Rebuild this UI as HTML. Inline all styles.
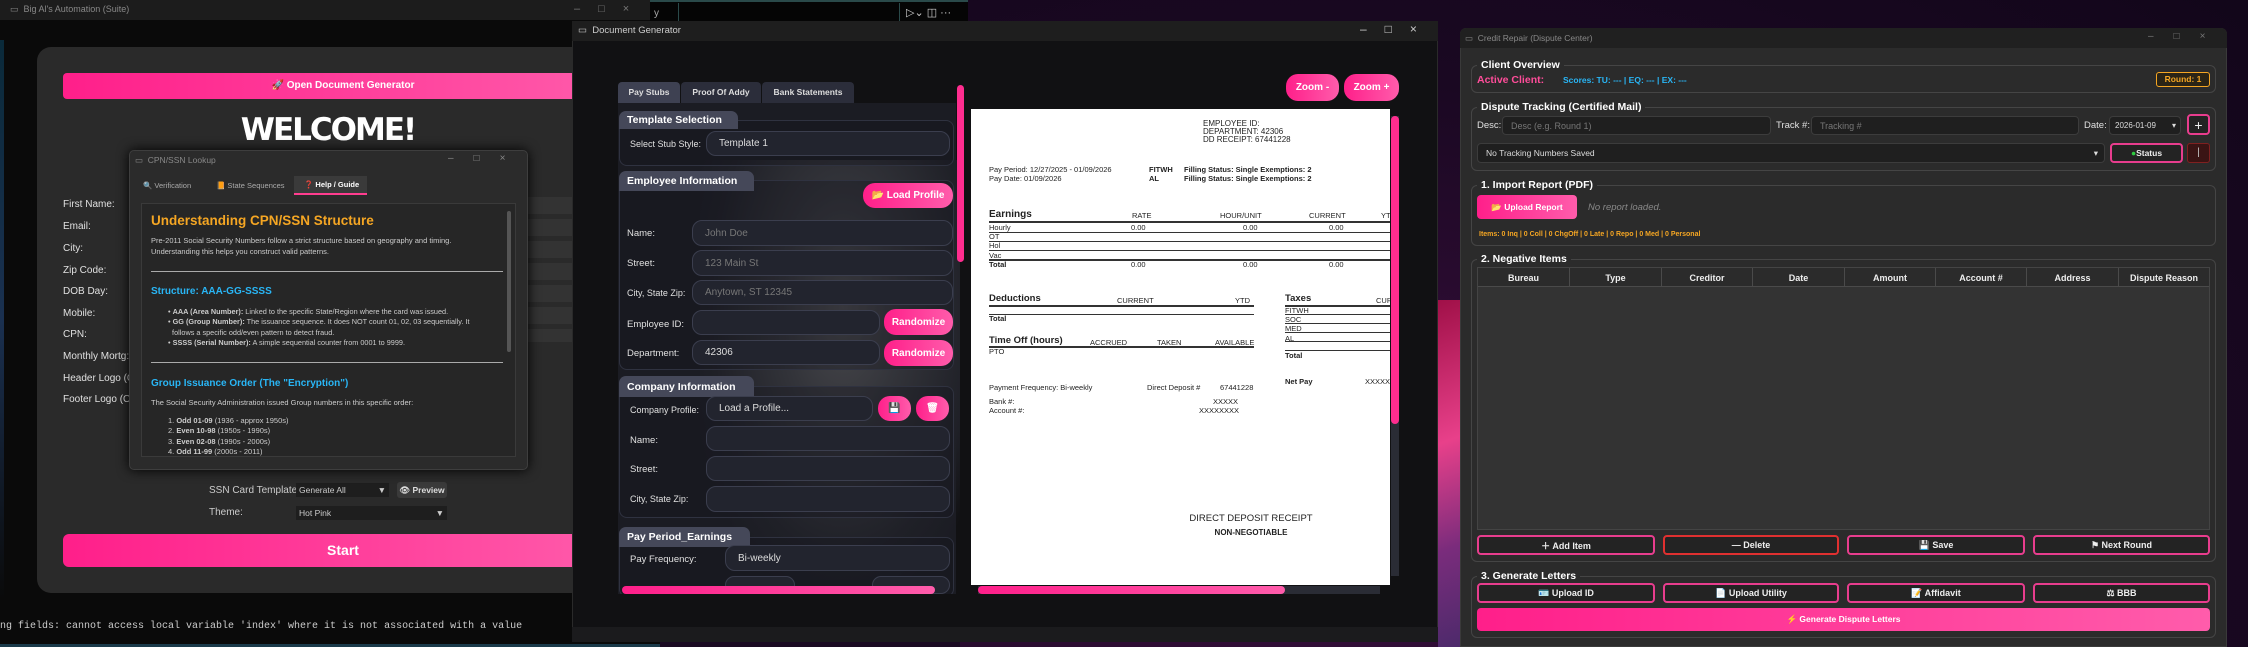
<!DOCTYPE html>
<html><head><meta charset="utf-8"><style>
*{box-sizing:border-box;margin:0;padding:0}
body{width:2248px;height:647px;overflow:hidden;position:relative;background:#1a0a22;font-family:"Liberation Sans",sans-serif;color:#ddd}
.a{position:absolute}
.lbl{position:absolute;font-size:12px;color:#e0e0e0;white-space:nowrap}
.pink{background:linear-gradient(90deg,#ff1f8a,#ff5cab);color:#fff;font-weight:bold;text-align:center;border-radius:6px;white-space:nowrap}
.inp{position:absolute;background:#22242e;border:1px solid #3b3e4e;border-radius:10px;font-size:12px;color:#777;padding-left:12px;display:flex;align-items:center;white-space:nowrap}
.hdr{position:absolute;background:#454859;border-radius:7px 7px 0 0;color:#fff;font-weight:bold;font-size:13px;padding-left:8px;display:flex;align-items:center;white-space:nowrap}
.sec{position:absolute;border:1px solid #2f3240;border-radius:8px;background:rgba(20,21,28,0.35)}
.pbtn{position:absolute;background:linear-gradient(90deg,#ff1f8a,#ff5cab);border-radius:12px;color:#fff;font-weight:bold;font-size:12px;display:flex;align-items:center;justify-content:center;white-space:nowrap}
.p{position:absolute;font-size:8.5px;color:#222;white-space:nowrap;font-family:"Liberation Sans",sans-serif}
.b{font-weight:bold}
.ln{position:absolute;height:1px;background:#333}
.grp{position:absolute;border:1px solid #454545;border-radius:6px}
.gt{position:absolute;background:#2b2b2b;color:#fff;font-weight:bold;font-size:10.5px;padding:0 4px;white-space:nowrap}
.rb{position:absolute;border:2px solid #e83d8e;border-radius:4px;background:#232323;color:#eee;font-size:9px;font-weight:bold;display:flex;align-items:center;justify-content:center;white-space:nowrap}
.ri{position:absolute;background:#1f1f1f;border:1px solid #3c3c3c;border-radius:4px;font-size:9px;color:#777;padding-left:8px;display:flex;align-items:center;white-space:nowrap}
.th{position:absolute;top:0;height:19px;border-right:1px solid #4a4a4a;font-size:9px;color:#eee;font-weight:bold;display:flex;align-items:center;justify-content:center}
.dl{position:absolute;font-size:9.5px;color:#e0e0e0;white-space:nowrap}
</style></head><body>

<!-- background purple -->
<div class="a" style="left:960px;top:0;width:1288px;height:647px;background:radial-gradient(ellipse at 30% 80%,#3a0f3e,#1a0822 60%,#12061a)"></div>
<div class="a" style="left:1438px;top:300px;width:40px;height:347px;background:linear-gradient(160deg,#a01048,#e8408a 40%,#7a2c7c 70%,#4a2a6a)"></div>

<!-- LEFT WINDOW -->
<div class="a" style="left:0;top:0;width:660px;height:647px;background:#0a0a0a"></div>
<div class="a" style="left:0;top:0;width:660px;height:20px;background:#1c1c1c"></div>
<div class="lbl" style="left:10px;top:4px;font-size:9px;color:#888">▭ &nbsp;Big Al's Automation (Suite)</div>
<div class="lbl" style="left:574px;top:3px;font-size:11px;color:#777;letter-spacing:18px">–□×</div>
<div class="a" style="left:0;top:40px;width:4px;height:560px;background:linear-gradient(#0a2a3a,#1a3050,#0a0a0a)"></div>
<div class="a" style="left:37px;top:47px;width:600px;height:546px;background:#2a2a2a;border-radius:14px"></div>
<div class="a" style="left:100px;top:160px;width:460px;height:320px;background:radial-gradient(ellipse,#363636,#2a2a2a 65%)"></div>
<div class="a pink" style="left:63px;top:73px;width:560px;height:26px;line-height:26px;font-size:10px;border-radius:4px">🚀 Open Document Generator</div>
<div class="a" style="left:200px;top:112px;width:256px;text-align:center;font-size:31px;font-weight:900;color:#fff;letter-spacing:-2px;font-family:'DejaVu Sans',sans-serif">WELCOME!</div>
<div class="lbl" style="left:63px;top:199px;font-size:10px">First Name:</div>
<div class="lbl" style="left:63px;top:221px;font-size:10px">Email:</div>
<div class="lbl" style="left:63px;top:243px;font-size:10px">City:</div>
<div class="lbl" style="left:63px;top:265px;font-size:10px">Zip Code:</div>
<div class="lbl" style="left:63px;top:286px;font-size:10px">DOB Day:</div>
<div class="lbl" style="left:63px;top:308px;font-size:10px">Mobile:</div>
<div class="lbl" style="left:63px;top:329px;font-size:10px">CPN:</div>
<div class="lbl" style="left:63px;top:351px;font-size:10px">Monthly Mortg:</div>
<div class="lbl" style="left:63px;top:373px;font-size:10px">Header Logo (Opt):</div>
<div class="lbl" style="left:63px;top:394px;font-size:10px">Footer Logo (Opt):</div>
<div class="a" style="left:528px;top:197px;width:60px;height:145px;background:repeating-linear-gradient(#333 0 17px,#2a2a2a 17px 22px)"></div>
<div class="lbl" style="left:209px;top:485px;font-size:10px;color:#ccc">SSN Card Template:</div>
<div class="a" style="left:296px;top:483px;width:93px;height:14px;background:#1e1e1e;font-size:8.5px;color:#ccc;padding-left:3px;line-height:14px">Generate All <span style="float:right;padding-right:3px">▼</span></div>
<div class="a" style="left:397px;top:482px;width:50px;height:16px;background:#3a3a3a;border-radius:3px;font-size:8.5px;color:#ddd;font-weight:bold;text-align:center;line-height:16px">👁 Preview</div>
<div class="lbl" style="left:209px;top:507px;font-size:10px;color:#ccc">Theme:</div>
<div class="a" style="left:296px;top:506px;width:151px;height:14px;background:#1e1e1e;font-size:8.5px;color:#ccc;padding-left:3px;line-height:14px">Hot Pink <span style="float:right;padding-right:3px">▼</span></div>
<div class="a pink" style="left:63px;top:534px;width:560px;height:33px;line-height:33px;font-size:14px;border-radius:6px">Start</div>
<div class="a" style="left:0;top:621px;font-family:'Liberation Mono',monospace;font-size:10px;color:#ccc;white-space:nowrap">ng fields: cannot access local variable 'index' where it is not associated with a value</div>
<div class="a" style="left:0;top:644px;width:660px;height:3px;background:#1a3a4a"></div>

<!-- CPN dialog -->
<div class="a" style="left:129px;top:150px;width:399px;height:320px;background:#2b2b2b;border:1px solid #3e3e3e;border-radius:5px;box-shadow:0 0 12px #000"></div>
<div class="lbl" style="left:135px;top:155px;font-size:8.5px;color:#888">▭ &nbsp;CPN/SSN Lookup</div>
<div class="lbl" style="left:448px;top:153px;font-size:10px;color:#888;letter-spacing:20px">–□×</div>
<div class="a" style="left:135px;top:177px;width:70px;height:18px;font-size:7.5px;color:#aaa;line-height:18px;padding-left:8px;white-space:nowrap">🔍 Verification</div>
<div class="a" style="left:210px;top:177px;width:83px;height:18px;font-size:7.5px;color:#aaa;line-height:18px;padding-left:6px;white-space:nowrap">📙 State Sequences</div>
<div class="a" style="left:294px;top:176px;width:73px;height:19px;background:#3a3a3a;border-bottom:2px solid #ff3d8f;font-size:7.5px;color:#fff;font-weight:bold;line-height:18px;padding-left:10px;white-space:nowrap">❓ Help / Guide</div>
<div class="a" style="left:141px;top:203px;width:375px;height:254px;background:#262626;border:1px solid #3a3a3a;overflow:hidden">
 <div class="a" style="left:365px;top:7px;width:4px;height:141px;background:#555;border-radius:2px"></div>
 <div class="a" style="left:9px;top:9px;font-size:13.5px;font-weight:bold;color:#f5a623">Understanding CPN/SSN Structure</div>
 <div class="a" style="left:9px;top:32px;font-size:7.5px;color:#ccc;line-height:10.5px;width:345px">Pre-2011 Social Security Numbers follow a strict structure based on geography and timing.<br>Understanding this helps you construct valid patterns.</div>
 <div class="a" style="left:9px;top:67px;width:352px;height:1px;background:#aaa"></div>
 <div class="a" style="left:9px;top:82px;font-size:10px;font-weight:bold;color:#29b6f6">Structure: AAA-GG-SSSS</div>
 <div class="a" style="left:26px;top:103px;font-size:7.3px;color:#ccc;line-height:10.3px;width:340px;white-space:nowrap">• <b>AAA (Area Number):</b> Linked to the specific State/Region where the card was issued.<br>• <b>GG (Group Number):</b> The issuance sequence. It does NOT count 01, 02, 03 sequentially. It<br>&nbsp;&nbsp;follows a specific odd/even pattern to detect fraud.<br>• <b>SSSS (Serial Number):</b> A simple sequential counter from 0001 to 9999.</div>
 <div class="a" style="left:9px;top:158px;width:352px;height:1px;background:#aaa"></div>
 <div class="a" style="left:9px;top:174px;font-size:10px;font-weight:bold;color:#29b6f6">Group Issuance Order (The "Encryption")</div>
 <div class="a" style="left:9px;top:194px;font-size:7.5px;color:#ccc">The Social Security Administration issued Group numbers in this specific order:</div>
 <div class="a" style="left:26px;top:212px;font-size:7.5px;color:#ccc;line-height:10.3px">1. <b>Odd 01-09</b> (1936 - approx 1950s)<br>2. <b>Even 10-98</b> (1950s - 1990s)<br>3. <b>Even 02-08</b> (1990s - 2000s)<br>4. <b>Odd 11-99</b> (2000s - 2011)</div>
</div>

<!-- top VS code strip -->
<div class="a" style="left:650px;top:0;width:318px;height:21px;background:#050505;border-top:2px solid #2a4a4a"></div>
<div class="a" style="left:678px;top:3px;width:1px;height:18px;background:#2a4a4a"></div>
<div class="a" style="left:899px;top:3px;width:1px;height:18px;background:#2a4a4a"></div>
<div class="lbl" style="left:654px;top:8px;font-size:10px;color:#aaa">y</div>
<div class="lbl" style="left:906px;top:6px;font-size:11px;color:#ccc">▷⌄ ◫ ···</div>

<!-- DOC GENERATOR -->
<div class="a" style="left:572px;top:21px;width:866px;height:621px;background:#111113;border:1px solid #2a2a2a"></div>
<div class="a" style="left:572px;top:21px;width:866px;height:20px;background:#1e1e1e"></div>
<div class="lbl" style="left:578px;top:25px;font-size:9.5px;color:#ccc">▭ &nbsp;Document Generator</div>
<div class="lbl" style="left:1360px;top:22px;font-size:12px;color:#ccc;letter-spacing:18px">–□×</div>
<div class="a" style="left:572px;top:627px;width:866px;height:15px;background:#1b1b1d"></div>

<div class="a" style="left:618px;top:103px;width:338px;height:491px;background:#1b1c23"></div>
<div class="a" style="left:700px;top:160px;width:260px;height:420px;background:radial-gradient(ellipse at 55% 35%,#4a4a4e 0,#33343a 30%,#1f2027 65%,rgba(27,28,35,0) 80%)"></div>
<div class="a" style="left:618px;top:82px;width:62px;height:21px;background:#3e4152;border-radius:4px 4px 0 0;font-size:8.5px;color:#ddd;font-weight:bold;text-align:center;line-height:21px">Pay Stubs</div>
<div class="a" style="left:681px;top:82px;width:80px;height:21px;background:#2b2d3a;border-radius:4px 4px 0 0;font-size:8.5px;color:#ddd;font-weight:bold;text-align:center;line-height:21px">Proof Of Addy</div>
<div class="a" style="left:762px;top:82px;width:92px;height:21px;background:#2b2d3a;border-radius:4px 4px 0 0;font-size:8.5px;color:#ddd;font-weight:bold;text-align:center;line-height:21px">Bank Statements</div>

<div class="sec" style="left:619px;top:120px;width:335px;height:46px"></div>
<div class="hdr" style="left:619px;top:111px;width:119px;height:18px;font-size:10.5px">Template Selection</div>
<div class="dl" style="left:630px;top:139px;font-size:9px">Select Stub Style:</div>
<div class="inp" style="left:706px;top:131px;width:244px;height:25px;color:#ddd;font-size:10px">Template 1</div>

<div class="sec" style="left:619px;top:180px;width:335px;height:190px"></div>
<div class="hdr" style="left:619px;top:171px;width:135px;height:20px;font-size:10.5px">Employee Information</div>
<div class="pbtn" style="left:863px;top:183px;width:90px;height:25px;font-size:10px">📂 Load Profile</div>
<div class="dl" style="left:627px;top:228px">Name:</div>
<div class="inp" style="left:692px;top:220px;width:261px;height:26px;font-size:10px">John Doe</div>
<div class="dl" style="left:627px;top:258px">Street:</div>
<div class="inp" style="left:692px;top:250px;width:261px;height:26px;font-size:10px">123 Main St</div>
<div class="dl" style="left:627px;top:288px;font-size:9px">City, State Zip:</div>
<div class="inp" style="left:692px;top:280px;width:261px;height:25px;font-size:10px">Anytown, ST 12345</div>
<div class="dl" style="left:627px;top:319px">Employee ID:</div>
<div class="inp" style="left:692px;top:310px;width:188px;height:25px"></div>
<div class="pbtn" style="left:884px;top:309px;width:69px;height:26px;font-size:10px">Randomize</div>
<div class="dl" style="left:627px;top:348px">Department:</div>
<div class="inp" style="left:692px;top:340px;width:188px;height:25px;color:#ddd;font-size:10px">42306</div>
<div class="pbtn" style="left:884px;top:340px;width:69px;height:26px;font-size:10px">Randomize</div>

<div class="sec" style="left:619px;top:386px;width:335px;height:132px"></div>
<div class="hdr" style="left:619px;top:376px;width:135px;height:21px;font-size:10.5px">Company Information</div>
<div class="dl" style="left:630px;top:405px;font-size:9px">Company Profile:</div>
<div class="inp" style="left:706px;top:396px;width:167px;height:25px;color:#ddd;font-size:10px">Load a Profile...</div>
<div class="pbtn" style="left:878px;top:396px;width:33px;height:25px;font-size:10px">💾</div>
<div class="pbtn" style="left:916px;top:396px;width:33px;height:25px;font-size:10px">🗑</div>
<div class="dl" style="left:630px;top:435px">Name:</div>
<div class="inp" style="left:706px;top:426px;width:244px;height:25px"></div>
<div class="dl" style="left:630px;top:464px">Street:</div>
<div class="inp" style="left:706px;top:456px;width:244px;height:25px"></div>
<div class="dl" style="left:630px;top:494px;font-size:9px">City, State Zip:</div>
<div class="inp" style="left:706px;top:486px;width:244px;height:26px"></div>

<div class="sec" style="left:619px;top:537px;width:335px;height:60px"></div>
<div class="hdr" style="left:619px;top:527px;width:131px;height:20px;font-size:10.5px">Pay Period_Earnings</div>
<div class="dl" style="left:630px;top:554px">Pay Frequency:</div>
<div class="inp" style="left:725px;top:545px;width:225px;height:26px;color:#ddd;font-size:10px">Bi-weekly</div>
<div class="inp" style="left:725px;top:576px;width:70px;height:18px"></div>
<div class="inp" style="left:872px;top:576px;width:78px;height:18px"></div>
<div class="a" style="left:618px;top:594px;width:338px;height:12px;background:#111113"></div>
<div class="a" style="left:622px;top:586px;width:313px;height:8px;background:linear-gradient(90deg,#ff1f8a,#ff5cab);border-radius:4px"></div>
<div class="a" style="left:957px;top:85px;width:7px;height:177px;background:#ff2d8f;border-radius:4px"></div>

<div class="pbtn" style="left:1286px;top:74px;width:53px;height:27px;font-size:10px">Zoom -</div>
<div class="pbtn" style="left:1344px;top:74px;width:55px;height:27px;font-size:10px">Zoom +</div>
<div class="a" style="left:1391px;top:116px;width:8px;height:460px;background:#2a2c35"></div>
<div class="a" style="left:1391px;top:116px;width:8px;height:308px;background:#ff2d8f;border-radius:4px"></div>
<div class="a" style="left:978px;top:586px;width:402px;height:8px;background:#2a2c35"></div>
<div class="a" style="left:978px;top:586px;width:307px;height:8px;background:linear-gradient(90deg,#ff1f8a,#ff5cab);border-radius:4px"></div>

<!-- paper -->
<div class="a" style="left:971px;top:109px;width:419px;height:476px;background:#fff;overflow:hidden">
 <div class="p" style="left:232px;top:11px;line-height:8px;font-size:8px">EMPLOYEE ID:<br>DEPARTMENT: 42306<br>DD RECEIPT: 67441228</div>
 <div class="p" style="left:18px;top:56px;line-height:9px;font-size:7.5px">Pay Period: 12/27/2025 - 01/09/2026<br>Pay Date: 01/09/2026</div>
 <div class="p b" style="left:178px;top:56px;line-height:9px;font-size:7.5px">FITWH<br>AL</div>
 <div class="p b" style="left:213px;top:56px;line-height:9px;font-size:7.5px">Filling Status: Single Exemptions: 2<br>Filling Status: Single Exemptions: 2</div>
 <div class="p b" style="left:18px;top:100px;font-size:10px">Earnings</div>
 <div class="p" style="left:161px;top:102px;font-size:7.5px">RATE</div>
 <div class="p" style="left:249px;top:102px;font-size:7.5px">HOUR/UNIT</div>
 <div class="p" style="left:338px;top:102px;font-size:7.5px">CURRENT</div>
 <div class="p" style="left:410px;top:102px;font-size:7.5px">YTD</div>
 <div class="ln" style="left:18px;top:112px;width:410px;height:2px"></div>
 <div class="p" style="left:18px;top:114px;line-height:9.2px;font-size:7.5px">Hourly<br>OT<br>Hol<br>Vac<br><b>Total</b></div>
 <div class="ln" style="left:18px;top:123px;width:410px"></div>
 <div class="ln" style="left:18px;top:132px;width:410px"></div>
 <div class="ln" style="left:18px;top:141px;width:410px"></div>
 <div class="ln" style="left:18px;top:150px;width:410px;height:2px"></div>
 <div class="p" style="left:160px;top:114px;font-size:7.5px">0.00</div><div class="p" style="left:272px;top:114px;font-size:7.5px">0.00</div><div class="p" style="left:358px;top:114px;font-size:7.5px">0.00</div>
 <div class="p" style="left:160px;top:151px;font-size:7.5px">0.00</div><div class="p" style="left:272px;top:151px;font-size:7.5px">0.00</div><div class="p" style="left:358px;top:151px;font-size:7.5px">0.00</div>
 <div class="p b" style="left:18px;top:184px;font-size:9.5px">Deductions</div>
 <div class="p" style="left:146px;top:187px;font-size:7.5px">CURRENT</div>
 <div class="p" style="left:264px;top:187px;font-size:7.5px">YTD</div>
 <div class="ln" style="left:18px;top:196px;width:265px;height:2px"></div>
 <div class="ln" style="left:18px;top:205px;width:265px"></div>
 <div class="p b" style="left:18px;top:205px;font-size:7.5px">Total</div>
 <div class="p b" style="left:18px;top:226px;font-size:9.5px">Time Off (hours)</div>
 <div class="p" style="left:119px;top:229px;font-size:7.5px">ACCRUED</div>
 <div class="p" style="left:186px;top:229px;font-size:7.5px">TAKEN</div>
 <div class="p" style="left:244px;top:229px;font-size:7.5px">AVAILABLE</div>
 <div class="ln" style="left:18px;top:237px;width:265px;height:2px"></div>
 <div class="p" style="left:18px;top:238px;font-size:7.5px">PTO</div>
 <div class="p b" style="left:314px;top:184px;font-size:9.5px">Taxes</div>
 <div class="p" style="left:405px;top:187px;font-size:7.5px">CURRENT</div>
 <div class="ln" style="left:314px;top:196px;width:110px;height:2px"></div>
 <div class="p" style="left:314px;top:197px;line-height:9.2px;font-size:7.5px">FITWH<br>SOC<br>MED<br>AL</div>
 <div class="ln" style="left:314px;top:205px;width:110px"></div><div class="ln" style="left:314px;top:214px;width:110px"></div><div class="ln" style="left:314px;top:223px;width:110px"></div><div class="ln" style="left:314px;top:232px;width:110px"></div><div class="ln" style="left:314px;top:241px;width:110px"></div>
 <div class="p b" style="left:314px;top:242px;font-size:7.5px">Total</div>
 <div class="p b" style="left:314px;top:268px;font-size:7.5px">Net Pay</div>
 <div class="p" style="left:394px;top:268px;font-size:7.5px">XXXXX</div>
 <div class="p" style="left:18px;top:274px;font-size:7.5px">Payment Frequency: Bi-weekly</div>
 <div class="p" style="left:176px;top:274px;font-size:7.5px">Direct Deposit #</div>
 <div class="p" style="left:249px;top:274px;font-size:7.5px">67441228</div>
 <div class="p" style="left:18px;top:288px;line-height:9px;font-size:7.5px">Bank #:<br>Account #:</div>
 <div class="p" style="left:242px;top:288px;font-size:7.5px">XXXXX</div>
 <div class="p" style="left:228px;top:297px;font-size:7.5px">XXXXXXXX</div>
 <div class="p" style="left:200px;top:404px;width:160px;text-align:center;font-size:9.5px">DIRECT DEPOSIT RECEIPT</div>
 <div class="p b" style="left:200px;top:419px;width:160px;text-align:center;font-size:8px">NON-NEGOTIABLE</div>
</div>

<!-- RIGHT WINDOW -->
<div class="a" style="left:1460px;top:28px;width:767px;height:619px;background:#2b2b2b;border:1px solid #3a3a3a;border-radius:6px 6px 0 0"></div>
<div class="a" style="left:1460px;top:28px;width:767px;height:20px;background:#202020;border-radius:6px 6px 0 0"></div>
<div class="lbl" style="left:1465px;top:33px;font-size:8.5px;color:#888">▭ &nbsp;Credit Repair (Dispute Center)</div>
<div class="lbl" style="left:2148px;top:31px;font-size:10px;color:#777;letter-spacing:20px">–□×</div>

<div class="grp" style="left:1471px;top:65px;width:745px;height:28px"></div>
<div class="gt" style="left:1477px;top:59px">Client Overview</div>
<div class="lbl" style="left:1477px;top:74px;font-size:10.5px;font-weight:bold;color:#ff4d9a">Active Client:</div>
<div class="lbl" style="left:1563px;top:75px;font-size:8.5px;font-weight:bold;color:#29b6f6">Scores: TU: --- | EQ: --- | EX: ---</div>
<div class="a" style="left:2156px;top:72px;width:54px;height:15px;border:1px solid #f5a623;border-radius:3px;color:#f5a623;font-size:8.5px;font-weight:bold;text-align:center;line-height:13px;background:#2a2416">Round: 1</div>

<div class="grp" style="left:1471px;top:107px;width:745px;height:64px"></div>
<div class="gt" style="left:1477px;top:101px">Dispute Tracking (Certified Mail)</div>
<div class="lbl" style="left:1477px;top:120px;font-size:9.5px">Desc:</div>
<div class="ri" style="left:1502px;top:116px;width:269px;height:19px">Desc (e.g. Round 1)</div>
<div class="lbl" style="left:1776px;top:120px;font-size:9.5px">Track #:</div>
<div class="ri" style="left:1811px;top:116px;width:268px;height:19px">Tracking #</div>
<div class="lbl" style="left:2084px;top:120px;font-size:9.5px">Date:</div>
<div class="ri" style="left:2109px;top:116px;width:72px;height:19px;color:#ddd;font-size:8px;padding-left:5px">2026-01-09<span style="position:absolute;right:4px">▾</span></div>
<div class="rb" style="left:2187px;top:114px;width:23px;height:21px;font-size:14px;font-weight:normal">+</div>
<div class="ri" style="left:1477px;top:143px;width:628px;height:20px;color:#ddd;font-size:8.5px">No Tracking Numbers Saved<span style="position:absolute;right:6px">▾</span></div>
<div class="rb" style="left:2110px;top:143px;width:73px;height:20px;font-size:8.5px"><span style="color:#2ecc40">●</span>Status</div>
<div class="a" style="left:2187px;top:143px;width:23px;height:20px;background:#3a1414;border:1px solid #802020;border-radius:3px;color:#ccc;text-align:center;font-size:10px;line-height:18px">|</div>

<div class="grp" style="left:1471px;top:185px;width:745px;height:61px"></div>
<div class="gt" style="left:1477px;top:179px">1. Import Report (PDF)</div>
<div class="a pink" style="left:1477px;top:195px;width:100px;height:24px;line-height:24px;font-size:8.5px;border-radius:4px">📂 Upload Report</div>
<div class="lbl" style="left:1588px;top:202px;font-size:9.5px;font-style:italic;color:#888">No report loaded.</div>
<div class="lbl" style="left:1479px;top:231px;font-size:7px;font-weight:bold;color:#f5a623">Items: 0 Inq | 0 Coll | 0 ChgOff | 0 Late | 0 Repo | 0 Med | 0 Personal</div>

<div class="grp" style="left:1471px;top:259px;width:745px;height:303px"></div>
<div class="gt" style="left:1477px;top:253px">2. Negative Items</div>
<div class="a" style="left:1477px;top:267px;width:733px;height:263px;background:#333;border:1px solid #444">
 <div class="a" style="left:0;top:0;width:731px;height:19px;background:#2b2b2b;border-bottom:1px solid #4a4a4a"></div>
 <div class="th" style="left:0;width:92px">Bureau</div><div class="th" style="left:92px;width:92px">Type</div><div class="th" style="left:184px;width:91px">Creditor</div><div class="th" style="left:275px;width:92px">Date</div><div class="th" style="left:367px;width:91px">Amount</div><div class="th" style="left:458px;width:91px">Account #</div><div class="th" style="left:549px;width:92px">Address</div><div class="th" style="left:641px;width:90px;border:none">Dispute Reason</div>
</div>
<div class="rb" style="left:1477px;top:535px;width:178px;height:20px">＋ Add Item</div>
<div class="rb" style="left:1663px;top:535px;width:176px;height:20px;border-color:#e03030">— Delete</div>
<div class="rb" style="left:1847px;top:535px;width:178px;height:20px">💾 Save</div>
<div class="rb" style="left:2033px;top:535px;width:177px;height:20px">⚑ Next Round</div>

<div class="grp" style="left:1471px;top:576px;width:745px;height:62px"></div>
<div class="gt" style="left:1477px;top:570px">3. Generate Letters</div>
<div class="rb" style="left:1477px;top:583px;width:178px;height:20px">🪪 Upload ID</div>
<div class="rb" style="left:1663px;top:583px;width:176px;height:20px">📄 Upload Utility</div>
<div class="rb" style="left:1847px;top:583px;width:178px;height:20px">📝 Affidavit</div>
<div class="rb" style="left:2033px;top:583px;width:177px;height:20px">⚖ BBB</div>
<div class="a pink" style="left:1477px;top:608px;width:733px;height:23px;line-height:23px;font-size:8.5px;border-radius:4px">⚡ Generate Dispute Letters</div>

</body></html>
